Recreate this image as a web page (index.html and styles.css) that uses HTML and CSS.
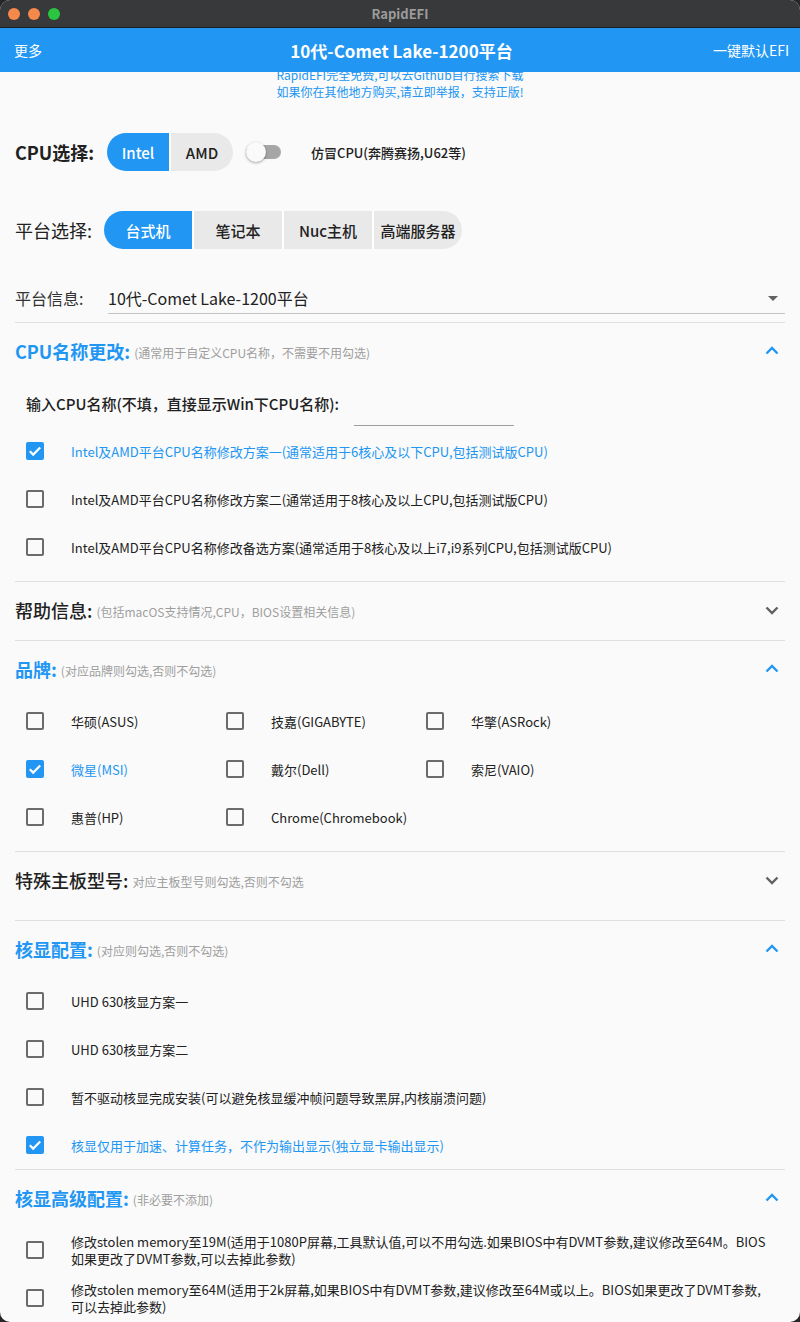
FILE: index.html
```html
<!DOCTYPE html>
<html lang="zh-CN">
<head>
    <meta charset="UTF-8">
    <meta name="viewport" content="width=device-width, initial-scale=1.0">
    <title>RapidEFI</title>
    <link rel="stylesheet" href="styles.css">
</head>
<body>
    <div class="window">
        <!-- Title bar mac -->
        <div class="titlebar">
            <div class="lights">
                <span class="light orange"></span>
                <span class="light orange"></span>
                <span class="light green"></span>
            </div>
            <div class="window-title">RapidEFI</div>
        </div>

        <!-- App bar -->
        <header class="appbar">
            <span class="appbar-action">更多</span>
            <span class="appbar-title">10代-Comet Lake-1200平台</span>
            <span class="appbar-action right">一键默认EFI</span>
        </header>

        <main class="content">
            <div class="notice">
                RapidEFI完全免费,可以去Github自行搜索下载<br>
                如果你在其他地方购买,请立即举报，支持正版!
            </div>

            <div class="page">
                <!-- CPU -->
                <div class="cpu-row">
                    <span class="row-label bold">CPU选择:</span>
                    <div class="segmented">
                        <span class="segment active">Intel</span>
                        <span class="segment">AMD</span>
                    </div>
                    <div class="switch"><span class="switch-thumb"></span></div>
                    <span class="switch-label">仿冒CPU(奔腾赛扬,U62等)</span>
                </div>

                <!-- Platform -->
                <div class="platform-row">
                    <span class="row-label">平台选择:</span>
                    <div class="segmented">
                        <span class="segment wide active">台式机</span>
                        <span class="segment wide">笔记本</span>
                        <span class="segment wide">Nuc主机</span>
                        <span class="segment wide">高端服务器</span>
                    </div>
                </div>

                <!-- Platform info -->
                <div class="info-row">
                    <span class="info-label">平台信息:</span>
                    <div class="dropdown">
                        <span>10代-Comet Lake-1200平台</span>
                        <span class="dropdown-arrow"></span>
                    </div>
                </div>

                <!-- CPU name -->
                <section class="panel open">
                    <div class="panel-head">
                        <span class="panel-title">CPU名称更改:</span>
                        <span class="panel-sub">(通常用于自定义CPU名称，不需要不用勾选)</span>
                        <svg class="chevron" viewBox="0 0 24 24"><polyline points="6.5,14.5 12,9 17.5,14.5"/></svg>
                    </div>
                    <div class="panel-body">
                        <div class="input-row">
                            <span class="input-label">输入CPU名称(不填，直接显示Win下CPU名称):</span>
                            <div class="text-field"></div>
                        </div>
                        <div class="check-row checked">
                            <span class="box"><svg viewBox="0 0 18 18"><polyline points="3.8,9.2 7.2,12.6 14.2,5.4"/></svg></span>
                            <span>Intel及AMD平台CPU名称修改方案一(通常适用于6核心及以下CPU,包括测试版CPU)</span>
                        </div>
                        <div class="check-row">
                            <span class="box"></span>
                            <span>Intel及AMD平台CPU名称修改方案二(通常适用于8核心及以上CPU,包括测试版CPU)</span>
                        </div>
                        <div class="check-row">
                            <span class="box"></span>
                            <span>Intel及AMD平台CPU名称修改备选方案(通常适用于8核心及以上i7,i9系列CPU,包括测试版CPU)</span>
                        </div>
                    </div>
                </section>

                <!-- Help -->
                <section class="panel">
                    <div class="panel-head">
                        <span class="panel-title">帮助信息:</span>
                        <span class="panel-sub">(包括macOS支持情况,CPU，BIOS设置相关信息)</span>
                        <svg class="chevron" viewBox="0 0 24 24"><polyline points="6.5,9.5 12,15 17.5,9.5"/></svg>
                    </div>
                </section>

                <!-- Brand -->
                <section class="panel open">
                    <div class="panel-head">
                        <span class="panel-title">品牌:</span>
                        <span class="panel-sub">(对应品牌则勾选,否则不勾选)</span>
                        <svg class="chevron" viewBox="0 0 24 24"><polyline points="6.5,14.5 12,9 17.5,14.5"/></svg>
                    </div>
                    <div class="panel-body brand-grid">
                        <div class="check-row"><span class="box"></span><span>华硕(ASUS)</span></div>
                        <div class="check-row"><span class="box"></span><span>技嘉(GIGABYTE)</span></div>
                        <div class="check-row"><span class="box"></span><span>华擎(ASRock)</span></div>
                        <div class="check-row checked">
                            <span class="box"><svg viewBox="0 0 18 18"><polyline points="3.8,9.2 7.2,12.6 14.2,5.4"/></svg></span>
                            <span>微星(MSI)</span>
                        </div>
                        <div class="check-row"><span class="box"></span><span>戴尔(Dell)</span></div>
                        <div class="check-row"><span class="box"></span><span>索尼(VAIO)</span></div>
                        <div class="check-row"><span class="box"></span><span>惠普(HP)</span></div>
                        <div class="check-row"><span class="box"></span><span>Chrome(Chromebook)</span></div>
                    </div>
                </section>

                <!-- Board -->
                <section class="panel board">
                    <div class="panel-head">
                        <span class="panel-title">特殊主板型号:</span>
                        <span class="panel-sub">对应主板型号则勾选,否则不勾选</span>
                        <svg class="chevron" viewBox="0 0 24 24"><polyline points="6.5,9.5 12,15 17.5,9.5"/></svg>
                    </div>
                </section>

                <!-- iGPU -->
                <section class="panel open tight">
                    <div class="panel-head">
                        <span class="panel-title">核显配置:</span>
                        <span class="panel-sub">(对应则勾选,否则不勾选)</span>
                        <svg class="chevron" viewBox="0 0 24 24"><polyline points="6.5,14.5 12,9 17.5,14.5"/></svg>
                    </div>
                    <div class="panel-body">
                        <div class="check-row"><span class="box"></span><span>UHD 630核显方案一</span></div>
                        <div class="check-row"><span class="box"></span><span>UHD 630核显方案二</span></div>
                        <div class="check-row"><span class="box"></span><span>暂不驱动核显完成安装(可以避免核显缓冲帧问题导致黑屏,内核崩溃问题)</span></div>
                        <div class="check-row checked">
                            <span class="box"><svg viewBox="0 0 18 18"><polyline points="3.8,9.2 7.2,12.6 14.2,5.4"/></svg></span>
                            <span>核显仅用于加速、计算任务，不作为输出显示(独立显卡输出显示)</span>
                        </div>
                    </div>
                </section>

                <!-- iGPU advanced -->
                <section class="panel open last">
                    <div class="panel-head">
                        <span class="panel-title">核显高级配置:</span>
                        <span class="panel-sub">(非必要不添加)</span>
                        <svg class="chevron" viewBox="0 0 24 24"><polyline points="6.5,14.5 12,9 17.5,14.5"/></svg>
                    </div>
                    <div class="panel-body">
                        <div class="check-row tall">
                            <span class="box"></span>
                            <span>修改stolen memory至19M(适用于1080P屏幕,工具默认值,可以不用勾选.如果BIOS中有DVMT参数,建议修改至64M。BIOS<br>如果更改了DVMT参数,可以去掉此参数)</span>
                        </div>
                        <div class="check-row tall">
                            <span class="box"></span>
                            <span>修改stolen memory至64M(适用于2k屏幕,如果BIOS中有DVMT参数,建议修改至64M或以上。BIOS如果更改了DVMT参数,<br>可以去掉此参数)</span>
                        </div>
                    </div>
                </section>
            </div>
        </main>
    </div>
</body>
</html>
```

FILE: styles.css
```css
/* Dasar */
body {
    margin: 0;
    background: #262626;
    font-family: "Noto Sans CJK SC", "Noto Sans", sans-serif;
    color: #212121;
}

.window {
    width: 800px;
    height: 1322px;
    background: #fafafa;
    border-radius: 10px;
    overflow: hidden;
    display: flex;
    flex-direction: column;
}

/* Title bar mac */
.titlebar {
    height: 28px;
    flex-shrink: 0;
    background: #38393b;
    border-bottom: 1px solid #1c1c1c;
    box-sizing: border-box;
    display: flex;
    align-items: center;
    position: relative;
}

.lights {
    display: flex;
    gap: 8px;
    padding-left: 8px;
}

.light {
    width: 12px;
    height: 12px;
    border-radius: 50%;
}

.light.orange {
    background: #f5894b;
}

.light.green {
    background: #2bc641;
}

.window-title {
    position: absolute;
    left: 0;
    right: 0;
    text-align: center;
    font-size: 13px;
    font-weight: bold;
    color: #9c9c9c;
}

/* App bar */
.appbar {
    height: 44px;
    flex-shrink: 0;
    background: #2196f3;
    color: white;
    display: grid;
    grid-template-columns: 1fr auto 1fr;
    align-items: center;
    padding: 0 11px 0 14px;
    position: relative;
    z-index: 1;
}

.appbar-action {
    font-size: 14px;
}

.appbar-action.right {
    text-align: right;
}

.appbar-title {
    font-size: 17px;
    font-weight: bold;
}

/* Konten */
.content {
    flex: 1;
    overflow: hidden;
}

.notice {
    margin-top: -6px;
    text-align: center;
    font-size: 12px;
    line-height: 17px;
    color: #2196f3;
}

.page {
    padding: 0 15px;
}

/* Baris pilihan */
.cpu-row, .platform-row {
    display: flex;
    align-items: center;
    height: 38px;
}

.cpu-row {
    margin-top: 33px;
}

.platform-row {
    margin-top: 40px;
}

.row-label {
    font-size: 18px;
    width: 92px;
    flex-shrink: 0;
}

.platform-row .row-label {
    width: 89px;
}

.row-label.bold {
    font-weight: bold;
}

.segmented {
    display: flex;
    gap: 2px;
    height: 38px;
    border-radius: 19px;
    overflow: hidden;
    background: #fff;
}

.segment {
    width: 62px;
    display: flex;
    align-items: center;
    justify-content: center;
    background: #e9e9e9;
    font-size: 15px;
    font-weight: 500;
}

.segment.wide {
    width: 88px;
}

.segment.active {
    background: #2196f3;
    color: white;
}

.switch {
    margin-left: 13px;
    width: 35px;
    height: 14px;
    border-radius: 7px;
    background: #a6a6a6;
    position: relative;
}

.switch-thumb {
    position: absolute;
    left: 0;
    top: -3px;
    width: 20px;
    height: 20px;
    border-radius: 50%;
    background: #fafafa;
    box-shadow: 0 1px 3px rgba(0, 0, 0, 0.35);
}

.switch-label {
    margin-left: 30px;
    font-size: 13px;
    font-weight: 500;
}

/* Platform info */
.info-row {
    display: flex;
    align-items: flex-start;
    margin-top: 37px;
}

.info-label {
    width: 93px;
    font-size: 16px;
    line-height: 24px;
    color: #333;
}

.dropdown {
    flex: 1;
    display: flex;
    align-items: center;
    justify-content: space-between;
    font-size: 16px;
    line-height: 24px;
    padding-bottom: 3px;
    border-bottom: 1px solid #c4c4c4;
}

.dropdown-arrow {
    width: 0;
    height: 0;
    margin-right: 7px;
    border-left: 5px solid transparent;
    border-right: 5px solid transparent;
    border-top: 5px solid #616161;
}

/* Expansion panel */
.panel {
    border-top: 1px solid #e0e0e0;
}

.info-row + .panel {
    margin-top: 8px;
}

.panel-head {
    height: 56px;
    display: flex;
    align-items: center;
}

.panel-title {
    font-size: 18px;
    font-weight: bold;
}

.panel:not(.open) .panel-title {
    font-weight: 500;
}

.panel-sub {
    margin-left: 4px;
    font-size: 12px;
    color: #9e9e9e;
    padding-top: 3px;
}

.chevron {
    margin-left: auto;
    margin-right: 1px;
    width: 24px;
    height: 24px;
    fill: none;
    stroke: #616161;
    stroke-width: 2.4;
}

.panel.open .panel-title {
    color: #2196f3;
}

.panel.open .chevron {
    stroke: #2196f3;
}

.panel:not(.open) {
    padding-bottom: 2px;
}

.panel.board {
    padding-bottom: 12px;
}

.panel-body {
    padding-bottom: 10px;
}

.panel.tight .panel-body {
    padding-bottom: 0;
}

.input-row {
    height: 48px;
    display: flex;
    align-items: center;
    padding-left: 11px;
}

.input-label {
    font-size: 15px;
    font-weight: 500;
}

.text-field {
    align-self: flex-end;
    margin-left: 15px;
    margin-bottom: 1px;
    width: 160px;
    height: 30px;
    border-bottom: 1px solid #9e9e9e;
}

/* Checkbox */
.check-row {
    height: 48px;
    display: flex;
    align-items: center;
    padding-left: 11px;
    font-size: 13px;
}

.check-row.tall {
    line-height: 17px;
}

.box {
    width: 18px;
    height: 18px;
    flex-shrink: 0;
    margin-right: 27px;
    box-sizing: border-box;
    border: 2px solid #6b6b6b;
    border-radius: 2px;
}

.check-row.checked {
    color: #2196f3;
}

.check-row.checked .box {
    border: none;
    background: #2196f3;
}

.box svg {
    display: block;
    width: 18px;
    height: 18px;
    fill: none;
    stroke: white;
    stroke-width: 2.2;
}

.brand-grid {
    display: grid;
    grid-template-columns: repeat(3, 200px);
}
```
